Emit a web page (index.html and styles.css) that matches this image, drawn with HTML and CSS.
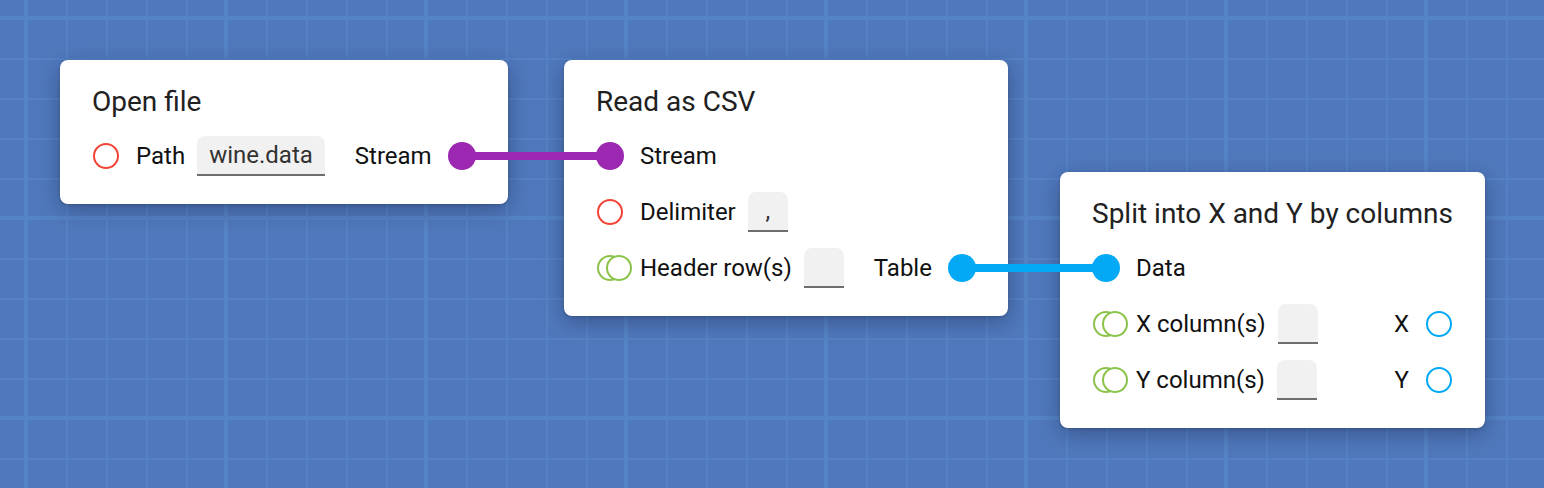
FILE: index.html
```html
<!DOCTYPE html>
<html lang="en">
<head>
<meta charset="utf-8">
<title>Node editor</title>
<link rel="stylesheet" href="styles.css">
</head>
<body>
<div class="canvas">
  <div class="node node-open">
    <div class="node-title">Open file</div>
    <div class="row">
      <div class="side">
        <svg class="port" viewBox="0 0 28 28"><circle cx="14" cy="14" r="12" class="ring red"/></svg>
        <span class="label">Path</span>
        <span class="field">wine.data</span>
      </div>
      <div class="side out">
        <span class="label">Stream</span>
        <svg class="port" viewBox="0 0 28 28"><circle cx="14" cy="14" r="14" class="fill purple"/></svg>
      </div>
    </div>
  </div>

  <div class="node node-csv">
    <div class="node-title">Read as CSV</div>
    <div class="row">
      <div class="side">
        <svg class="port" viewBox="0 0 28 28"><circle cx="14" cy="14" r="14" class="fill purple"/></svg>
        <span class="label">Stream</span>
      </div>
    </div>
    <div class="row">
      <div class="side">
        <svg class="port" viewBox="0 0 28 28"><circle cx="14" cy="14" r="12" class="ring red"/></svg>
        <span class="label">Delimiter</span>
        <span class="field small">,</span>
      </div>
    </div>
    <div class="row">
      <div class="side">
        <svg class="port" viewBox="0 0 28 28" overflow="visible"><circle cx="14" cy="14" r="12" class="ring green"/><circle cx="23" cy="14" r="12" class="ring green"/></svg>
        <span class="label">Header row(s)</span>
        <span class="field small"></span>
      </div>
      <div class="side out">
        <span class="label">Table</span>
        <svg class="port" viewBox="0 0 28 28"><circle cx="14" cy="14" r="14" class="fill blue"/></svg>
      </div>
    </div>
  </div>

  <div class="node node-split">
    <div class="node-title">Split into X and Y by columns</div>
    <div class="row">
      <div class="side">
        <svg class="port" viewBox="0 0 28 28"><circle cx="14" cy="14" r="14" class="fill blue"/></svg>
        <span class="label">Data</span>
      </div>
    </div>
    <div class="row">
      <div class="side">
        <svg class="port" viewBox="0 0 28 28" overflow="visible"><circle cx="14" cy="14" r="12" class="ring green"/><circle cx="23" cy="14" r="12" class="ring green"/></svg>
        <span class="label">X column(s)</span>
        <span class="field small"></span>
      </div>
      <div class="side out">
        <span class="label">X</span>
        <svg class="port" viewBox="0 0 28 28"><circle cx="14" cy="14" r="12" class="ring blue-ring"/></svg>
      </div>
    </div>
    <div class="row">
      <div class="side">
        <svg class="port" viewBox="0 0 28 28" overflow="visible"><circle cx="14" cy="14" r="12" class="ring green"/><circle cx="23" cy="14" r="12" class="ring green"/></svg>
        <span class="label">Y column(s)</span>
        <span class="field small"></span>
      </div>
      <div class="side out">
        <span class="label">Y</span>
        <svg class="port" viewBox="0 0 28 28"><circle cx="14" cy="14" r="12" class="ring blue-ring"/></svg>
      </div>
    </div>
  </div>

  <svg class="links" width="1544" height="488" viewBox="0 0 1544 488">
    <line x1="462" y1="156" x2="610" y2="156" class="link purple-link"/>
    <line x1="962" y1="268" x2="1106" y2="268" class="link blue-link"/>
  </svg>
</div>
</body>
</html>
```

FILE: styles.css
```css
html, body {
  margin: 0;
  padding: 0;
}

body {
  font-family: Roboto, "Liberation Sans", sans-serif;
  background: #5079bd;
}

.canvas {
  position: relative;
  width: 1544px;
  height: 488px;
  overflow: hidden;
  background-color: #5079bd;
  background-image:
    linear-gradient(to right, #5584c6 0 4px, transparent 4px),
    linear-gradient(to bottom, #5584c6 0 4px, transparent 4px),
    linear-gradient(to right, #5483c5 0 2px, transparent 2px),
    linear-gradient(to bottom, #5483c5 0 2px, transparent 2px);
  background-size: 200px 100%, 100% 200px, 40px 100%, 100% 40px;
  background-position: 24px 0, 0 16px, 26px 0, 0 18px;
}

.node {
  position: absolute;
  background: #ffffff;
  border-radius: 8px;
  padding: 18px 32px 20px;
  box-shadow: 0 6px 22px rgba(20, 30, 60, 0.38), 0 1px 3px rgba(0, 0, 0, 0.15);
  z-index: 1;
}

.node-open { left: 60px; top: 60px; }
.node-csv { left: 564px; top: 60px; }
.node-split { left: 1060px; top: 172px; }

.node-title {
  font-size: 28px;
  line-height: 48px;
  height: 48px;
  margin-bottom: 2px;
  color: #212121;
  white-space: nowrap;
}

.row {
  display: flex;
  align-items: center;
  height: 56px;
  column-gap: 30px;
  white-space: nowrap;
}

.side {
  display: flex;
  align-items: center;
}

.side.out {
  margin-left: auto;
}

.port {
  width: 28px;
  height: 28px;
  flex: none;
  display: block;
}

.ring {
  fill: #ffffff;
  stroke-width: 2;
}

.red { stroke: #f44336; }
.green { stroke: #8bc34a; }
.blue-ring { stroke: #03a9f4; }

.fill.purple { fill: #9c27b0; }
.fill.blue { fill: #03a9f4; }

.label {
  font-size: 24px;
  color: #111111;
  margin-left: 16px;
}

.side.out .label {
  margin-left: 0;
  margin-right: 16px;
}

.field {
  box-sizing: border-box;
  height: 40px;
  min-width: 40px;
  margin-left: 12px;
  padding: 0 12px;
  background: #f1f1f1;
  border-radius: 8px 8px 0 0;
  border-bottom: 2px solid #6e6e6e;
  font-size: 24px;
  line-height: 39px;
  color: #333333;
  text-align: center;
}

.field.small {
  width: 40px;
  padding: 0;
}

.links {
  position: absolute;
  left: 0;
  top: 0;
  z-index: 2;
  pointer-events: none;
}

.link {
  stroke-width: 8;
}

.purple-link { stroke: #9c27b0; }
.blue-link { stroke: #03a9f4; }
```
